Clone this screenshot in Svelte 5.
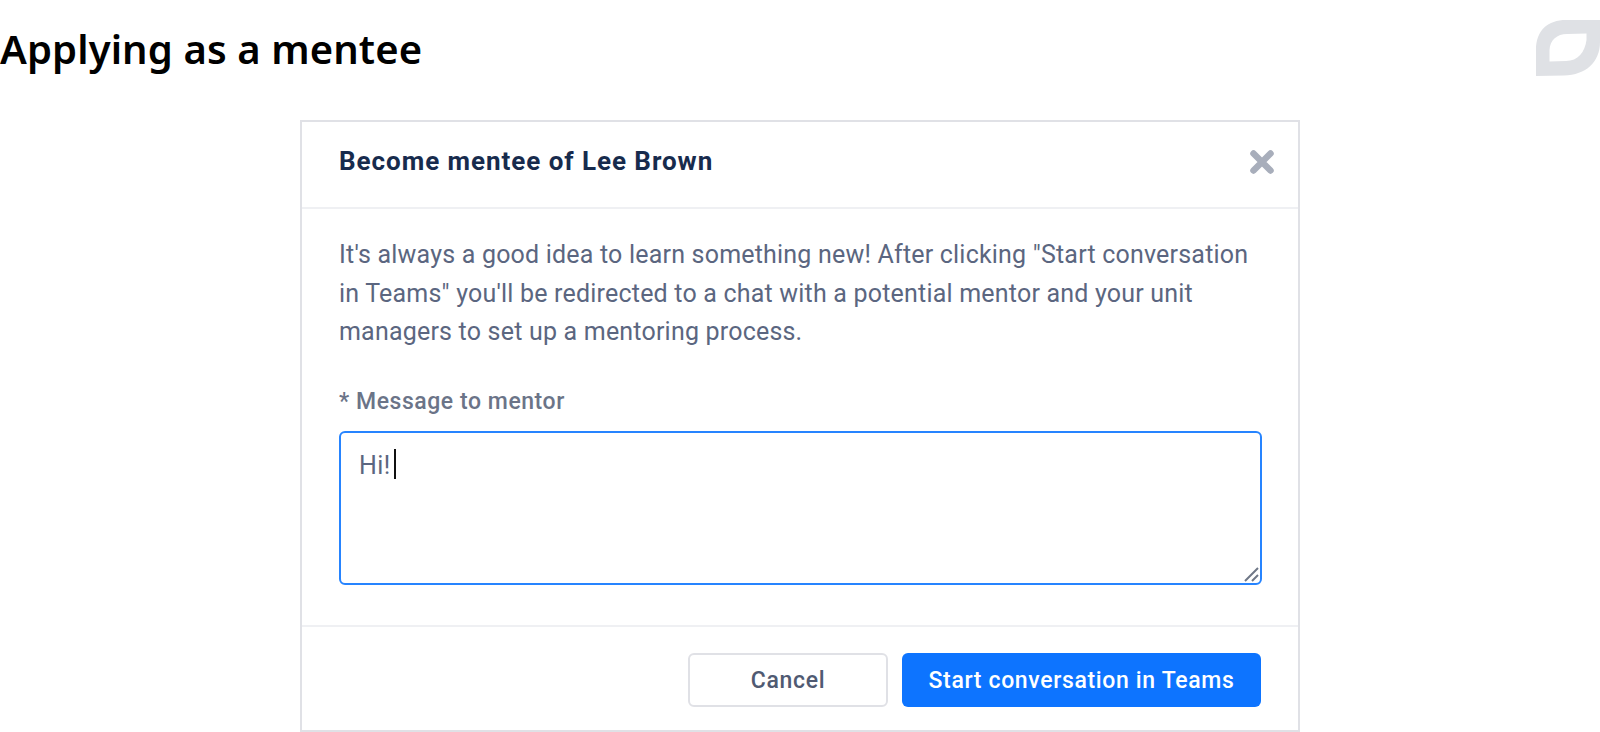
<script lang="ts">
  let message = "Hi!";
</script>

<div class="page">
  <header class="top">
    <h1>Applying as a mentee</h1>
    <svg class="logo" viewBox="0 0 64 56" width="64" height="56" aria-hidden="true">
      <path
        fill="#dfe1e5"
        fill-rule="evenodd"
        d="M0 56V30C0 10 12 0 30 0H64V22C64 42 50 55 28 55.5ZM13.5 41.5V30C14 20 21 14 31 14L50.5 13.5V20C49 32 42 41 30 41Z"
      />
    </svg>
  </header>

  <section class="modal">
    <div class="modal-head">
      <h2>Become mentee of Lee Brown</h2>
      <svg class="close" viewBox="0 0 24 24" width="24" height="24" aria-hidden="true">
        <path d="M3.5 3.5L20.5 20.5M20.5 3.5L3.5 20.5" stroke="#a8aebb" stroke-width="6.5" stroke-linecap="round" />
      </svg>
    </div>

    <div class="modal-body">
      <p>It's always a good idea to learn something new! After clicking "Start conversation in Teams" you'll be redirected to a chat with a potential mentor and your unit managers to set up a mentoring process.</p>
      <div class="label">* Message to mentor</div>
      <div class="textarea">
        <span class="value">{message}</span><span class="caret"></span>
        <svg class="grip" viewBox="0 0 16 16" width="16" height="16" aria-hidden="true">
          <path d="M1 14L14 1M8 14L14 8" stroke="#6f7787" stroke-width="2" />
        </svg>
      </div>
    </div>

    <div class="modal-foot">
      <button class="btn ghost">Cancel</button>
      <button class="btn primary">Start conversation in Teams</button>
    </div>
  </section>
</div>

<style>
  :global(body) {
    margin: 0;
    background: #fff;
  }

  .page {
    width: 1600px;
    height: 732px;
    overflow: hidden;
    display: flex;
    flex-direction: column;
    align-items: center;
    font-family: Roboto, "Liberation Sans", sans-serif;
  }

  .top {
    width: 100%;
    height: 120px;
    flex: none;
    display: flex;
    justify-content: space-between;
    align-items: flex-start;
  }

  h1 {
    margin: 24px 0 0;
    font-family: "Noto Sans", sans-serif;
    font-size: 40px;
    line-height: 50px;
    font-weight: 600;
    letter-spacing: 0.1px;
    color: #000;
  }

  .logo {
    margin-top: 20px;
  }

  .modal {
    width: 1000px;
    height: 612px;
    box-sizing: border-box;
    border: 2px solid #e0e1e6;
    display: flex;
    flex-direction: column;
    flex: none;
  }

  .modal-head {
    height: 87px;
    box-sizing: border-box;
    border-bottom: 2px solid #eff0f3;
    padding: 0 24px 5px 37px;
    display: flex;
    align-items: center;
    justify-content: space-between;
  }

  h2 {
    margin: 0 0 2px;
    font-size: 26px;
    font-weight: 700;
    color: #172b4d;
    letter-spacing: 0.95px;
  }

  .modal-body {
    padding: 27px 36px 0 37px;
    flex: 1;
  }

  p {
    margin: 0;
    font-size: 25px;
    line-height: 38.5px;
    letter-spacing: 0.2px;
    color: #5b6680;
  }

  .label {
    margin-top: 35px;
    font-size: 23px;
    line-height: 30px;
    font-weight: 500;
    letter-spacing: 0.55px;
    color: #6b7488;
  }

  .textarea {
    position: relative;
    margin-top: 14px;
    height: 154px;
    box-sizing: border-box;
    border: 2px solid #2684ff;
    border-radius: 6px;
    padding: 15px 18px;
    font-size: 25px;
    line-height: 36px;
    letter-spacing: 0.4px;
    color: #5b6680;
    display: flex;
    align-items: flex-start;
  }

  .caret {
    width: 2px;
    height: 30px;
    margin: 1px 0 0 3px;
    background: #111;
  }

  .grip {
    position: absolute;
    right: 0;
    bottom: 0;
  }

  .modal-foot {
    height: 105px;
    box-sizing: border-box;
    border-top: 2px solid #eff0f3;
    padding: 26px 37px 0;
    display: flex;
    justify-content: flex-end;
    align-items: flex-start;
    gap: 14px;
  }

  .btn {
    height: 54px;
    box-sizing: border-box;
    border-radius: 6px;
    font-family: inherit;
    font-size: 23px;
    font-weight: 500;
    letter-spacing: 0.65px;
  }

  .ghost {
    width: 200px;
    background: #fff;
    border: 2px solid #e0e1e6;
    color: #505a72;
  }

  .primary {
    width: 359px;
    background: #0d74ff;
    border: none;
    color: #fff;
  }
</style>
